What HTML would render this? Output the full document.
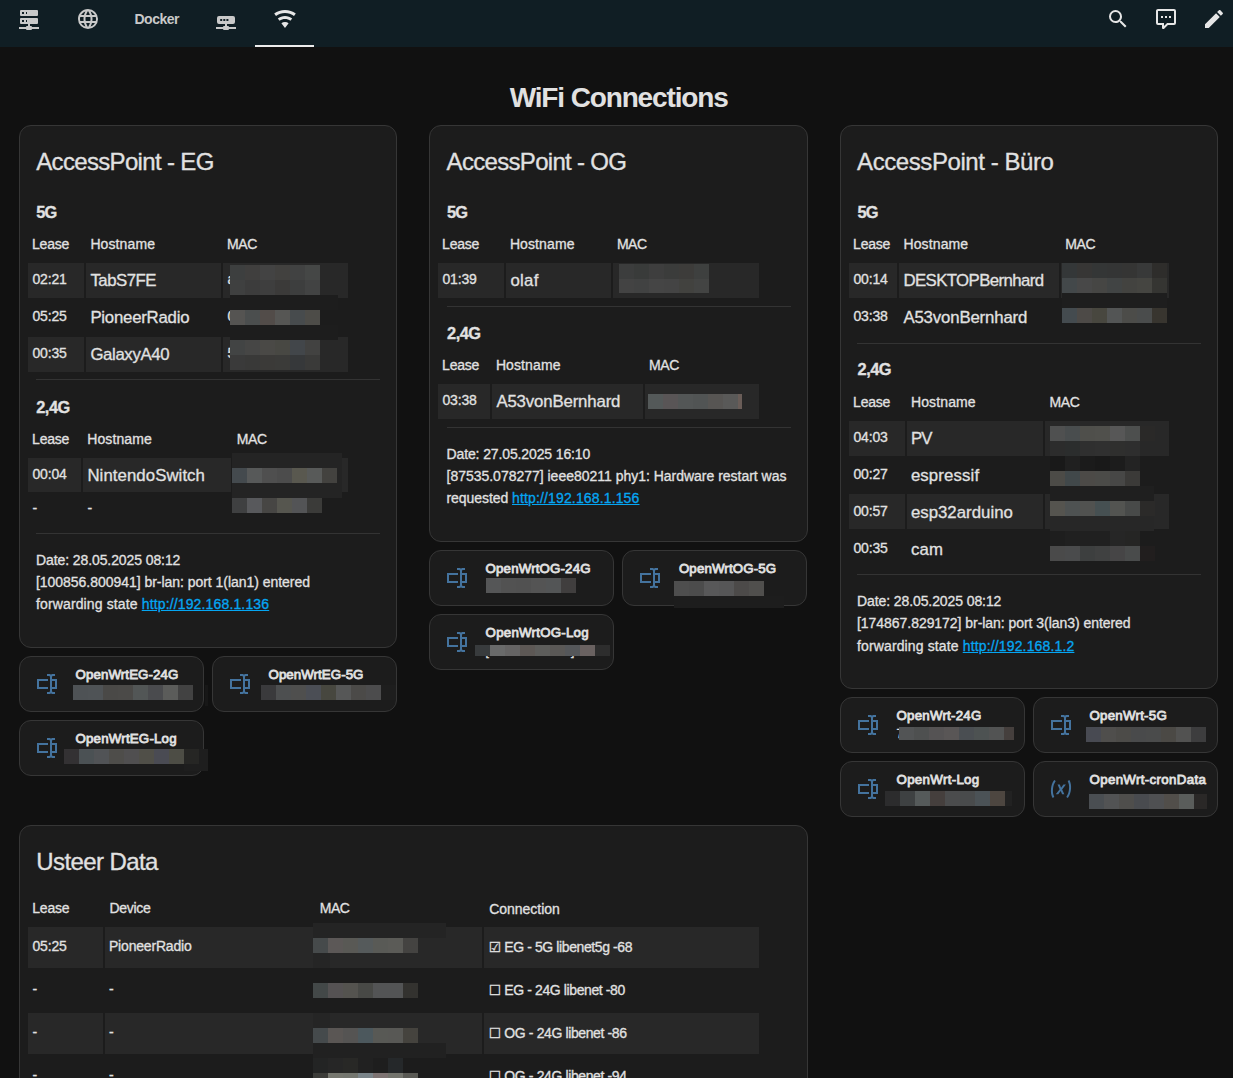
<!DOCTYPE html>
<html lang="de"><head><meta charset="utf-8"><title>WiFi Connections</title>
<style>
*{box-sizing:border-box}
html,body{margin:0;padding:0}
body{width:1233px;height:1078px;overflow:hidden;background:#111;color:#e1e1e1;
 font-family:"Liberation Sans","DejaVu Sans",sans-serif;font-size:14px;position:relative;-webkit-text-stroke:0.3px currentColor}
.bar{position:absolute;left:0;top:0;width:1233px;height:47px;background:#101e24}
.ic{position:absolute;fill:#c9c9c9}
.ic.on{fill:#e6e6e6}
.ul{position:absolute;background:#ececec;height:2px}
.t{position:absolute;white-space:pre;margin:0}
.card{position:absolute;background:#1c1c1c;border:1px solid #363636;border-radius:12px}
.ti{fill:#44739e}
.tl{-webkit-text-stroke:0.8px currentColor}
h1.t,.tab{-webkit-text-stroke:0}
.tb{position:absolute;border-collapse:separate;border-spacing:2px;table-layout:fixed;font-size:14px}
.tb th{font-weight:400;text-align:left;vertical-align:bottom;line-height:20px;white-space:nowrap;padding:0}
.tb td{padding:5.6px 0 0 4.4px;line-height:20px;vertical-align:top;white-space:nowrap;overflow:hidden}
.tb tr.o td{background:#282828}
hr{position:absolute;margin:0;border:0;height:1px;background:#333}
.blur{position:absolute;display:flex}
.blur i{display:block;height:100%}
.r{position:absolute}
a{color:#05a6f2;text-decoration:underline}
.p{position:absolute;margin:0;line-height:22.3px;font-size:14px;white-space:pre}

</style></head>
<body>
<header class="bar"><nav aria-label="Views">
<svg class="ic" style="left:17px;top:7px;" viewBox="0 0 24 24" width="24" height="24" aria-hidden="true"><path fill-rule="evenodd" d="M13,19H14A1,1 0 0,1 15,20H22V22H15A1,1 0 0,1 14,23H10A1,1 0 0,1 9,22H2V20H9A1,1 0 0,1 10,19H11V17H4A1,1 0 0,1 3,16V12A1,1 0 0,1 4,11H20A1,1 0 0,1 21,12V16A1,1 0 0,1 20,17H13V19M4,3H20A1,1 0 0,1 21,4V8A1,1 0 0,1 20,9H4A1,1 0 0,1 3,8V4A1,1 0 0,1 4,3M9,7H10V5H9V7M9,15H10V13H9V15M5,5V7H7V5H5M5,13V15H7V13H5Z"/></svg>
<svg class="ic" style="left:76px;top:7px;" viewBox="0 0 24 24" width="24" height="24" aria-hidden="true"><path fill-rule="evenodd" d="M16.36,14C16.44,13.34 16.5,12.68 16.5,12C16.5,11.32 16.44,10.66 16.36,10H19.74C19.9,10.64 20,11.31 20,12C20,12.69 19.9,13.36 19.74,14M14.59,19.56C15.19,18.45 15.65,17.25 15.97,16H18.92C17.96,17.65 16.43,18.93 14.59,19.56M14.34,14H9.66C9.56,13.34 9.5,12.68 9.5,12C9.5,11.32 9.56,10.65 9.66,10H14.34C14.43,10.65 14.5,11.32 14.5,12C14.5,12.68 14.43,13.34 14.34,14M12,19.96C11.17,18.76 10.5,17.43 10.09,16H13.91C13.5,17.43 12.83,18.76 12,19.96M8,8H5.08C6.03,6.34 7.57,5.06 9.4,4.44C8.8,5.55 8.35,6.75 8,8M5.08,16H8C8.35,17.25 8.8,18.45 9.4,19.56C7.57,18.93 6.03,17.65 5.08,16M4.26,14C4.1,13.36 4,12.69 4,12C4,11.31 4.1,10.64 4.26,10H7.64C7.56,10.66 7.5,11.32 7.5,12C7.5,12.68 7.56,13.34 7.64,14M12,4.03C12.83,5.23 13.5,6.57 13.91,8H10.09C10.5,6.57 11.17,5.23 12,4.03M18.92,8H15.97C15.65,6.75 15.19,5.55 14.59,4.44C16.43,5.07 17.96,6.34 18.92,8M12,2C6.47,2 2,6.5 2,12A10,10 0 0,0 12,22A10,10 0 0,0 22,12A10,10 0 0,0 12,2Z"/></svg>
<div class="t tab" style="left:134.4px;top:9.25px;font-size:14px;font-weight:700;line-height:20px;letter-spacing:-0.461px;color:#c9c9c9;">Docker</div>
<svg class="ic" style="left:214px;top:7px;" viewBox="0 0 24 24" width="24" height="24" aria-hidden="true"><path fill-rule="evenodd" d="M5,9H19A2,2 0 0,1 21,11V15A2,2 0 0,1 19,17H13V19H14A1,1 0 0,1 15,20H22V22H15A1,1 0 0,1 14,23H10A1,1 0 0,1 9,22H2V20H9A1,1 0 0,1 10,19H11V17H5A2,2 0 0,1 3,15V11A2,2 0 0,1 5,9M6.2,12V14H8.2V12H6.2M9.3,12V14H11.3V12H9.3M12.4,12V14H14.4V12H12.4Z"/></svg>
<svg class="ic on" style="left:273px;top:7px;" viewBox="0 0 24 24" width="24" height="24" aria-hidden="true"><path fill-rule="evenodd" d="M12,21L15.6,16.2C14.6,15.45 13.35,15 12,15C10.65,15 9.4,15.45 8.4,16.2L12,21M12,3C7.95,3 4.21,4.34 1.2,6.6L3,9C5.5,7.12 8.62,6 12,6C15.38,6 18.5,7.12 21,9L22.8,6.6C19.79,4.34 16.05,3 12,3M12,9C9.3,9 6.81,9.89 4.8,11.4L6.6,13.8C8.1,12.67 9.97,12 12,12C14.03,12 15.9,12.67 17.4,13.8L19.2,11.4C17.19,9.89 14.7,9 12,9Z"/></svg>
<div class="ul" style="left:255px;top:45px;width:59px"></div>
</nav><div role="toolbar" aria-label="Actions">
<svg class="ic on" style="left:1106px;top:7px;" viewBox="0 0 24 24" width="24" height="24" aria-hidden="true"><path fill-rule="evenodd" d="M9.5,3A6.5,6.5 0 0,1 16,9.5C16,11.11 15.41,12.59 14.44,13.73L14.71,14H15.5L20.5,19L19,20.5L14,15.5V14.71L13.73,14.44C12.59,15.41 11.11,16 9.5,16A6.5,6.5 0 0,1 3,9.5A6.5,6.5 0 0,1 9.5,3M9.5,5C7,5 5,7 5,9.5C5,12 7,14 9.5,14C12,14 14,12 14,9.5C14,7 12,5 9.5,5Z"/></svg>
<svg class="ic on" style="left:1154px;top:7px;" viewBox="0 0 24 24" width="24" height="24" aria-hidden="true"><path fill-rule="evenodd" d="M9,22A1,1 0 0,1 8,21V18H4A2,2 0 0,1 2,16V4C2,2.89 2.9,2 4,2H20A2,2 0 0,1 22,4V16A2,2 0 0,1 20,18H13.9L10.2,21.71C10,21.9 9.75,22 9.5,22V22H9M10,16V19.08L13.08,16H20V4H4V16H10M17,11H15V9H17V11M13,11H11V9H13V11M9,11H7V9H9V11Z"/></svg>
<svg class="ic on" style="left:1201.7px;top:7px;" viewBox="0 0 24 24" width="24" height="24" aria-hidden="true"><path fill-rule="evenodd" d="M20.71,7.04C21.1,6.65 21.1,6 20.71,5.63L18.37,3.29C18,2.9 17.35,2.9 16.96,3.29L15.12,5.12L18.87,8.87M3,17.25V21H6.75L17.81,9.93L14.06,6.18L3,17.25Z"/></svg>
</div></header>
<main>
<h1 class="t h1" style="left:509.7px;top:78.20px;font-size:28px;font-weight:700;line-height:39px;letter-spacing:-1.137px;">WiFi Connections</h1>
<section aria-label="AccessPoint - EG">
<div class="card" style="left:19px;top:125px;width:378.4px;height:523px"></div>
<h2 class="t ch" style="left:36.2px;top:144.68px;font-size:24px;font-weight:400;line-height:34px;letter-spacing:-0.660px;">AccessPoint - EG</h2>
<h3 class="t h3" style="left:36.3px;top:200.82px;font-size:16.4px;font-weight:700;line-height:23px;letter-spacing:-0.887px;">5G</h3>
<table class="tb" style="left:26px;top:232px;width:324px"><colgroup><col style="width:56px"><col style="width:135px"><col style="width:125px"></colgroup><thead><tr><th style="height:27px;padding:0 0 6.65px 4.00px;letter-spacing:-0.211px;">Lease</th><th style="height:27px;padding:0 0 6.65px 4.40px;letter-spacing:0.111px;">Hostname</th><th style="height:27px;padding:0 0 6.65px 4.10px;letter-spacing:-0.442px;">MAC</th></tr></thead><tbody><tr class="o" style="height:35px"><td style="letter-spacing:-0.149px;">02:21</td><td style="letter-spacing:-0.490px;font-size:16.8px;padding-top:7.6px;">TabS7FE</td><td style="">a</td></tr><tr style="height:35px"><td style="letter-spacing:-0.149px;">05:25</td><td style="letter-spacing:-0.232px;font-size:16.8px;padding-top:7.6px;">PioneerRadio</td><td style="">0</td></tr><tr class="o" style="height:35px"><td style="letter-spacing:-0.149px;">00:35</td><td style="letter-spacing:-0.366px;font-size:16.8px;padding-top:7.6px;">GalaxyA40</td><td style="">5</td></tr></tbody></table>
<hr style="left:36px;top:379px;width:344px">
<h3 class="t h3" style="left:36.2px;top:395.52px;font-size:16.4px;font-weight:700;line-height:23px;letter-spacing:-0.487px;">2,4G</h3>
<table class="tb" style="left:26px;top:427px;width:324px"><colgroup><col style="width:53px"><col style="width:148px"><col style="width:115px"></colgroup><thead><tr><th style="height:27px;padding:0 0 6.95px 4.10px;letter-spacing:-0.211px;">Lease</th><th style="height:27px;padding:0 0 6.95px 4.20px;letter-spacing:0.111px;">Hostname</th><th style="height:27px;padding:0 0 6.95px 3.80px;letter-spacing:-0.442px;">MAC</th></tr></thead><tbody><tr class="o" style="height:34px"><td style="letter-spacing:-0.149px;">00:04</td><td style="letter-spacing:0.071px;font-size:16.8px;padding-top:7.6px;">NintendoSwitch</td><td></td></tr><tr style="height:29px"><td style="padding-top:3.6px;">-</td><td style="padding-top:3.6px;">-</td><td></td></tr></tbody></table>
<hr style="left:36px;top:533px;width:344px">
<p class="p" style="left:36px;top:549.08px;line-height:22.15px"><span style="letter-spacing:-0.093px;">Date: 28.05.2025 08:12</span><br><span style="letter-spacing:-0.035px;">[100856.800941] br-lan: port 1(lan1) entered</span><br><span style="letter-spacing:0.129px;">forwarding state </span><a style="letter-spacing:0.147px;">http://192.168.1.136</a></p>
<div class="card tile" style="left:19px;top:656px;width:185px;height:56px"></div>
<svg class="ic ti" style="left:35.0px;top:672px;" viewBox="0 0 24 24" width="24" height="24" aria-hidden="true"><path fill-rule="evenodd" d="M17,7H22V17H17V19A1,1 0 0,0 18,20H20V22H17.5C16.95,22 16,21.55 16,21C16,21.55 15.05,22 14.5,22H12V20H14A1,1 0 0,0 15,19V5A1,1 0 0,0 14,4H12V2H14.5C15.05,2 16,2.45 16,3C16,2.45 16.95,2 17.5,2H20V4H18A1,1 0 0,0 17,5V7M2,7H13V9H4V15H13V17H2V7M20,15V9H17V15H20Z"/></svg>
<div class="t tl" style="left:75.5px;top:665.39px;font-size:13.3px;font-weight:400;line-height:19px;letter-spacing:0.097px;">OpenWrtEG-24G</div>
<div class="card tile" style="left:212px;top:656px;width:185px;height:56px"></div>
<svg class="ic ti" style="left:228.0px;top:672px;" viewBox="0 0 24 24" width="24" height="24" aria-hidden="true"><path fill-rule="evenodd" d="M17,7H22V17H17V19A1,1 0 0,0 18,20H20V22H17.5C16.95,22 16,21.55 16,21C16,21.55 15.05,22 14.5,22H12V20H14A1,1 0 0,0 15,19V5A1,1 0 0,0 14,4H12V2H14.5C15.05,2 16,2.45 16,3C16,2.45 16.95,2 17.5,2H20V4H18A1,1 0 0,0 17,5V7M2,7H13V9H4V15H13V17H2V7M20,15V9H17V15H20Z"/></svg>
<div class="t tl" style="left:268.5px;top:665.39px;font-size:13.3px;font-weight:400;line-height:19px;letter-spacing:0.055px;">OpenWrtEG-5G</div>
<div class="card tile" style="left:19px;top:720px;width:185px;height:56px"></div>
<svg class="ic ti" style="left:35.0px;top:736px;" viewBox="0 0 24 24" width="24" height="24" aria-hidden="true"><path fill-rule="evenodd" d="M17,7H22V17H17V19A1,1 0 0,0 18,20H20V22H17.5C16.95,22 16,21.55 16,21C16,21.55 15.05,22 14.5,22H12V20H14A1,1 0 0,0 15,19V5A1,1 0 0,0 14,4H12V2H14.5C15.05,2 16,2.45 16,3C16,2.45 16.95,2 17.5,2H20V4H18A1,1 0 0,0 17,5V7M2,7H13V9H4V15H13V17H2V7M20,15V9H17V15H20Z"/></svg>
<div class="t tl" style="left:75.5px;top:729.39px;font-size:13.3px;font-weight:400;line-height:19px;letter-spacing:0.193px;">OpenWrtEG-Log</div>
</section>
<section aria-label="AccessPoint - OG">
<div class="card" style="left:429.1px;top:125px;width:378.6px;height:416.6px"></div>
<h2 class="t ch" style="left:446.6px;top:144.68px;font-size:24px;font-weight:400;line-height:34px;letter-spacing:-0.690px;">AccessPoint - OG</h2>
<h3 class="t h3" style="left:447.0px;top:200.82px;font-size:16.4px;font-weight:700;line-height:23px;letter-spacing:-0.887px;">5G</h3>
<table class="tb" style="left:436px;top:232px;width:325px"><colgroup><col style="width:66px"><col style="width:105px"><col style="width:146px"></colgroup><thead><tr><th style="height:27px;padding:0 0 6.65px 4.10px;letter-spacing:-0.211px;">Lease</th><th style="height:27px;padding:0 0 6.65px 3.90px;letter-spacing:0.111px;">Hostname</th><th style="height:27px;padding:0 0 6.65px 3.90px;letter-spacing:-0.442px;">MAC</th></tr></thead><tbody><tr class="o" style="height:35px"><td style="letter-spacing:-0.149px;">01:39</td><td style="letter-spacing:0.334px;font-size:16.8px;padding-top:7.6px;">olaf</td><td></td></tr></tbody></table>
<hr style="left:446.5px;top:306px;width:344px">
<h3 class="t h3" style="left:447.0px;top:322.32px;font-size:16.4px;font-weight:700;line-height:23px;letter-spacing:-0.487px;">2,4G</h3>
<table class="tb" style="left:436px;top:353px;width:325px"><colgroup><col style="width:52px"><col style="width:151px"><col style="width:114px"></colgroup><thead><tr><th style="height:27px;padding:0 0 6.85px 4.10px;letter-spacing:-0.211px;">Lease</th><th style="height:27px;padding:0 0 6.85px 3.90px;letter-spacing:0.111px;">Hostname</th><th style="height:27px;padding:0 0 6.85px 4.10px;letter-spacing:-0.442px;">MAC</th></tr></thead><tbody><tr class="o" style="height:35px"><td style="letter-spacing:-0.149px;">03:38</td><td style="letter-spacing:-0.147px;font-size:16.8px;padding-top:7.6px;">A53vonBernhard</td><td></td></tr></tbody></table>
<hr style="left:446.5px;top:427px;width:344px">
<p class="p" style="left:446.5px;top:443.15px;line-height:22.0px"><span style="letter-spacing:-0.120px;">Date: 27.05.2025 16:10</span><br><span style="letter-spacing:-0.013px;">[87535.078277] ieee80211 phy1: Hardware restart was</span><br><span style="letter-spacing:-0.067px;">requested </span><a style="letter-spacing:0.147px;">http://192.168.1.156</a></p>
<div class="card tile" style="left:429.1px;top:550px;width:185px;height:56px"></div>
<svg class="ic ti" style="left:445.1px;top:566px;" viewBox="0 0 24 24" width="24" height="24" aria-hidden="true"><path fill-rule="evenodd" d="M17,7H22V17H17V19A1,1 0 0,0 18,20H20V22H17.5C16.95,22 16,21.55 16,21C16,21.55 15.05,22 14.5,22H12V20H14A1,1 0 0,0 15,19V5A1,1 0 0,0 14,4H12V2H14.5C15.05,2 16,2.45 16,3C16,2.45 16.95,2 17.5,2H20V4H18A1,1 0 0,0 17,5V7M2,7H13V9H4V15H13V17H2V7M20,15V9H17V15H20Z"/></svg>
<div class="t tl" style="left:485.6px;top:559.39px;font-size:13.3px;font-weight:400;line-height:19px;letter-spacing:0.145px;">OpenWrtOG-24G</div>
<div class="card tile" style="left:622.4px;top:550px;width:185px;height:56px"></div>
<svg class="ic ti" style="left:638.4px;top:566px;" viewBox="0 0 24 24" width="24" height="24" aria-hidden="true"><path fill-rule="evenodd" d="M17,7H22V17H17V19A1,1 0 0,0 18,20H20V22H17.5C16.95,22 16,21.55 16,21C16,21.55 15.05,22 14.5,22H12V20H14A1,1 0 0,0 15,19V5A1,1 0 0,0 14,4H12V2H14.5C15.05,2 16,2.45 16,3C16,2.45 16.95,2 17.5,2H20V4H18A1,1 0 0,0 17,5V7M2,7H13V9H4V15H13V17H2V7M20,15V9H17V15H20Z"/></svg>
<div class="t tl" style="left:678.9px;top:559.39px;font-size:13.3px;font-weight:400;line-height:19px;letter-spacing:0.124px;">OpenWrtOG-5G</div>
<div class="card tile" style="left:429.1px;top:614px;width:185px;height:56px"></div>
<svg class="ic ti" style="left:445.1px;top:630px;" viewBox="0 0 24 24" width="24" height="24" aria-hidden="true"><path fill-rule="evenodd" d="M17,7H22V17H17V19A1,1 0 0,0 18,20H20V22H17.5C16.95,22 16,21.55 16,21C16,21.55 15.05,22 14.5,22H12V20H14A1,1 0 0,0 15,19V5A1,1 0 0,0 14,4H12V2H14.5C15.05,2 16,2.45 16,3C16,2.45 16.95,2 17.5,2H20V4H18A1,1 0 0,0 17,5V7M2,7H13V9H4V15H13V17H2V7M20,15V9H17V15H20Z"/></svg>
<div class="t tl" style="left:485.6px;top:623.39px;font-size:13.3px;font-weight:400;line-height:19px;letter-spacing:0.226px;">OpenWrtOG-Log</div>
<div class="t ts" style="left:485.5px;top:642.84px;font-size:12px;font-weight:400;line-height:17px;">[</div>
<div class="t ts" style="left:571px;top:642.84px;font-size:12px;font-weight:400;line-height:17px;">]</div>
</section>
<section aria-label="AccessPoint - Büro">
<div class="card" style="left:840px;top:125px;width:378px;height:563.6px"></div>
<h2 class="t ch" style="left:857.1px;top:144.68px;font-size:24px;font-weight:400;line-height:34px;letter-spacing:-0.427px;">AccessPoint - Büro</h2>
<h3 class="t h3" style="left:857.5px;top:200.82px;font-size:16.4px;font-weight:700;line-height:23px;letter-spacing:-0.887px;">5G</h3>
<table class="tb" style="left:847px;top:232px;width:324px"><colgroup><col style="width:48px"><col style="width:160px"><col style="width:108px"></colgroup><thead><tr><th style="height:27px;padding:0 0 6.65px 4.10px;letter-spacing:-0.211px;">Lease</th><th style="height:27px;padding:0 0 6.65px 4.50px;letter-spacing:0.111px;">Hostname</th><th style="height:27px;padding:0 0 6.65px 4.30px;letter-spacing:-0.442px;">MAC</th></tr></thead><tbody><tr class="o" style="height:35px"><td style="letter-spacing:-0.149px;">00:14</td><td style="letter-spacing:-0.583px;font-size:16.8px;padding-top:7.6px;">DESKTOPBernhard</td><td></td></tr><tr style="height:35px"><td style="letter-spacing:-0.149px;">03:38</td><td style="letter-spacing:-0.154px;font-size:16.8px;padding-top:7.6px;">A53vonBernhard</td><td></td></tr></tbody></table>
<hr style="left:857px;top:343px;width:344px">
<h3 class="t h3" style="left:857.5px;top:358.22px;font-size:16.4px;font-weight:700;line-height:23px;letter-spacing:-0.487px;">2,4G</h3>
<table class="tb" style="left:847px;top:390px;width:324px"><colgroup><col style="width:55.5px"><col style="width:136.0px"><col style="width:124.5px"></colgroup><thead><tr><th style="height:27px;padding:0 0 7.35px 4.10px;letter-spacing:-0.211px;">Lease</th><th style="height:27px;padding:0 0 7.35px 4.50px;letter-spacing:0.111px;">Hostname</th><th style="height:27px;padding:0 0 7.35px 5.10px;letter-spacing:-0.442px;">MAC</th></tr></thead><tbody><tr class="o" style="height:35px"><td style="letter-spacing:-0.149px;">04:03</td><td style="letter-spacing:-0.745px;font-size:16.8px;padding-top:7.6px;">PV</td><td></td></tr><tr style="height:34px"><td style="letter-spacing:-0.149px;">00:27</td><td style="letter-spacing:0.127px;font-size:16.8px;padding-top:7.6px;">espressif</td><td></td></tr><tr class="o" style="height:35px"><td style="letter-spacing:-0.149px;padding-top:6.6px;">00:57</td><td style="letter-spacing:0.023px;font-size:16.8px;padding-top:8.6px;">esp32arduino</td><td></td></tr><tr style="height:35px"><td style="letter-spacing:-0.149px;padding-top:6.6px;">00:35</td><td style="letter-spacing:0.232px;font-size:16.8px;padding-top:8.6px;">cam</td><td></td></tr></tbody></table>
<hr style="left:857px;top:574px;width:344px">
<p class="p" style="left:857px;top:589.98px;line-height:22.35px"><span style="letter-spacing:-0.093px;">Date: 28.05.2025 08:12</span><br><span style="letter-spacing:-0.044px;">[174867.829172] br-lan: port 3(lan3) entered</span><br><span style="letter-spacing:0.129px;">forwarding state </span><a style="letter-spacing:0.151px;">http://192.168.1.2</a></p>
<div class="card tile" style="left:840px;top:697px;width:185px;height:56px"></div>
<svg class="ic ti" style="left:856.0px;top:713px;" viewBox="0 0 24 24" width="24" height="24" aria-hidden="true"><path fill-rule="evenodd" d="M17,7H22V17H17V19A1,1 0 0,0 18,20H20V22H17.5C16.95,22 16,21.55 16,21C16,21.55 15.05,22 14.5,22H12V20H14A1,1 0 0,0 15,19V5A1,1 0 0,0 14,4H12V2H14.5C15.05,2 16,2.45 16,3C16,2.45 16.95,2 17.5,2H20V4H18A1,1 0 0,0 17,5V7M2,7H13V9H4V15H13V17H2V7M20,15V9H17V15H20Z"/></svg>
<div class="t tl" style="left:896.5px;top:706.39px;font-size:13.3px;font-weight:400;line-height:19px;letter-spacing:0.224px;">OpenWrt-24G</div>
<div class="t ts" style="left:896.5px;top:725.84px;font-size:12px;font-weight:400;line-height:17px;">7</div>
<div class="card tile" style="left:1033px;top:697px;width:185px;height:56px"></div>
<svg class="ic ti" style="left:1049.0px;top:713px;" viewBox="0 0 24 24" width="24" height="24" aria-hidden="true"><path fill-rule="evenodd" d="M17,7H22V17H17V19A1,1 0 0,0 18,20H20V22H17.5C16.95,22 16,21.55 16,21C16,21.55 15.05,22 14.5,22H12V20H14A1,1 0 0,0 15,19V5A1,1 0 0,0 14,4H12V2H14.5C15.05,2 16,2.45 16,3C16,2.45 16.95,2 17.5,2H20V4H18A1,1 0 0,0 17,5V7M2,7H13V9H4V15H13V17H2V7M20,15V9H17V15H20Z"/></svg>
<div class="t tl" style="left:1089.5px;top:706.39px;font-size:13.3px;font-weight:400;line-height:19px;letter-spacing:0.236px;">OpenWrt-5G</div>
<div class="card tile" style="left:840px;top:761px;width:185px;height:56px"></div>
<svg class="ic ti" style="left:856.0px;top:777px;" viewBox="0 0 24 24" width="24" height="24" aria-hidden="true"><path fill-rule="evenodd" d="M17,7H22V17H17V19A1,1 0 0,0 18,20H20V22H17.5C16.95,22 16,21.55 16,21C16,21.55 15.05,22 14.5,22H12V20H14A1,1 0 0,0 15,19V5A1,1 0 0,0 14,4H12V2H14.5C15.05,2 16,2.45 16,3C16,2.45 16.95,2 17.5,2H20V4H18A1,1 0 0,0 17,5V7M2,7H13V9H4V15H13V17H2V7M20,15V9H17V15H20Z"/></svg>
<div class="t tl" style="left:896.5px;top:770.39px;font-size:13.3px;font-weight:400;line-height:19px;letter-spacing:0.311px;">OpenWrt-Log</div>
<div class="card tile" style="left:1033px;top:761px;width:185px;height:56px"></div>
<svg class="ic ti" style="left:1049.0px;top:777px;" viewBox="0 0 24 24" width="24" height="24" aria-hidden="true"><path fill-rule="evenodd" d="M20.41,3C21.8,5.71 22.35,8.84 22,12C21.8,15.16 20.7,18.29 18.83,21L17.3,20C18.91,17.57 19.85,14.8 20,12C20.34,9.2 19.89,6.43 18.7,4L20.41,3M5.17,3L6.7,4C5.09,6.43 4.15,9.2 4,12C3.66,14.8 4.12,17.57 5.3,20L3.61,21C2.21,18.29 1.65,15.17 2,12C2.2,8.84 3.3,5.71 5.17,3M12.08,10.68L14.4,7.45H16.93L13.15,12.45L15.35,17.37H13.09L11.71,14L9.28,17.33H6.76L10.66,12.21L8.53,7.45H10.8L12.08,10.68Z"/></svg>
<div class="t tl" style="left:1089.5px;top:770.39px;font-size:13.3px;font-weight:400;line-height:19px;letter-spacing:0.335px;">OpenWrt-cronData</div>
</section>
<section aria-label="Usteer Data">
<div class="card" style="left:19px;top:825px;width:788.5px;height:300px"></div>
<h2 class="t ch" style="left:36.3px;top:844.68px;font-size:24px;font-weight:400;line-height:34px;letter-spacing:-0.597px;">Usteer Data</h2>
<table class="tb" style="left:26px;top:896px;width:735px"><colgroup><col style="width:74.5px"><col style="width:208px"><col style="width:167.5px"><col style="width:274.5px"></colgroup><thead><tr><th style="height:27px;padding:0 0 6.85px 4.30px;letter-spacing:-0.211px;">Lease</th><th style="height:27px;padding:0 0 6.85px 5.00px;letter-spacing:-0.316px;">Device</th><th style="height:27px;padding:0 0 6.85px 5.00px;letter-spacing:-0.442px;">MAC</th><th style="height:27px;padding:0 0 5.85px 5.00px;letter-spacing:-0.043px;">Connection</th></tr></thead><tbody><tr class="o" style="height:41px"><td style="letter-spacing:-0.149px;padding-top:9.3px;">05:25</td><td style="letter-spacing:-0.179px;padding-top:9.3px;">PioneerRadio</td><td></td><td style="letter-spacing:-0.402px;padding-top:10.3px;">☑ EG - 5G libenet5g -68</td></tr><tr style="height:41px"><td style="padding-top:8.8px;">-</td><td style="padding-top:8.8px;">-</td><td></td><td style="letter-spacing:-0.393px;padding-top:10.3px;">☐ EG - 24G libenet -80</td></tr><tr class="o" style="height:41px"><td style="padding-top:8.8px;">-</td><td style="padding-top:8.8px;">-</td><td></td><td style="letter-spacing:-0.387px;padding-top:10.3px;">☐ OG - 24G libenet -86</td></tr><tr style="height:41px"><td style="padding-top:8.8px;">-</td><td style="padding-top:8.8px;">-</td><td></td><td style="letter-spacing:-0.387px;padding-top:10.3px;">☐ OG - 24G libenet -94</td></tr></tbody></table>
</section>
<div class="redacted" aria-hidden="true">
<div class="r" style="left:230px;top:295px;width:108px;height:15px;background:#1d1d1d"></div>
<div class="r" style="left:230px;top:325px;width:108px;height:15px;background:#1d1d1d"></div>
<div class="blur" style="left:230px;top:265px;width:90px;height:15px"><i style="background:#3d3f3f;width:15px"></i><i style="background:#403f3e;width:15px"></i><i style="background:#434343;width:15px"></i><i style="background:#42413f;width:15px"></i><i style="background:#414242;width:15px"></i><i style="background:#454746;width:15px"></i></div>
<div class="blur" style="left:230px;top:280px;width:90px;height:15px"><i style="background:#3f4040;width:15px"></i><i style="background:#3c3c3c;width:15px"></i><i style="background:#3e3e3e;width:15px"></i><i style="background:#3b3a39;width:15px"></i><i style="background:#3d3e3e;width:15px"></i><i style="background:#424343;width:15px"></i></div>
<div class="blur" style="left:230px;top:310px;width:90px;height:15px"><i style="background:#555452;width:15px"></i><i style="background:#4b4e4e;width:15px"></i><i style="background:#524c49;width:15px"></i><i style="background:#565654;width:15px"></i><i style="background:#474b4d;width:15px"></i><i style="background:#4d4c48;width:15px"></i></div>
<div class="blur" style="left:230px;top:340px;width:90px;height:15px"><i style="background:#424444;width:15px"></i><i style="background:#464645;width:15px"></i><i style="background:#4a4946;width:15px"></i><i style="background:#484843;width:15px"></i><i style="background:#42464a;width:15px"></i><i style="background:#424241;width:15px"></i></div>
<div class="blur" style="left:230px;top:355px;width:90px;height:15px"><i style="background:#3a3a3a;width:15px"></i><i style="background:#393938;width:15px"></i><i style="background:#3b3a38;width:15px"></i><i style="background:#3b3b39;width:15px"></i><i style="background:#36383a;width:15px"></i><i style="background:#3a3a39;width:15px"></i></div>
<div class="r" style="left:232px;top:453px;width:110px;height:45px;background:#242424"></div>
<div class="blur" style="left:232px;top:468px;width:105px;height:15px"><i style="background:#444a4e;width:15px"></i><i style="background:#575959;width:15px"></i><i style="background:#4f4f4f;width:15px"></i><i style="background:#4c4c4c;width:15px"></i><i style="background:#59584f;width:15px"></i><i style="background:#585a59;width:15px"></i><i style="background:#43423f;width:15px"></i></div>
<div class="blur" style="left:232px;top:498px;width:90px;height:15px"><i style="background:#3f4041;width:15px"></i><i style="background:#58595c;width:15px"></i><i style="background:#474644;width:15px"></i><i style="background:#56564f;width:15px"></i><i style="background:#535456;width:15px"></i><i style="background:#3b3b39;width:15px"></i></div>
<div class="blur" style="left:619px;top:264px;width:90px;height:15px"><i style="background:#3c3d3d;width:15px"></i><i style="background:#393b3a;width:15px"></i><i style="background:#3e3e3e;width:15px"></i><i style="background:#3b3c3b;width:15px"></i><i style="background:#3d3c3a;width:15px"></i><i style="background:#3e403f;width:15px"></i></div>
<div class="blur" style="left:619px;top:279px;width:90px;height:14px"><i style="background:#434343;width:15px"></i><i style="background:#414242;width:15px"></i><i style="background:#454545;width:15px"></i><i style="background:#444444;width:15px"></i><i style="background:#42423f;width:15px"></i><i style="background:#434443;width:15px"></i></div>
<div class="blur" style="left:648px;top:394px;width:90px;height:15px"><i style="background:#545959;width:15px"></i><i style="background:#595556;width:15px"></i><i style="background:#535656;width:15px"></i><i style="background:#515454;width:15px"></i><i style="background:#575553;width:15px"></i><i style="background:#595958;width:15px"></i></div>
<div class="r" style="left:738px;top:394px;width:4px;height:15px;background:#6a5d58"></div>
<div class="blur" style="left:1062px;top:263px;width:105px;height:15px"><i style="background:#343738;width:15px"></i><i style="background:#373635;width:15px"></i><i style="background:#343636;width:15px"></i><i style="background:#343535;width:15px"></i><i style="background:#353534;width:15px"></i><i style="background:#383939;width:15px"></i><i style="background:#2e2d2b;width:15px"></i></div>
<div class="blur" style="left:1062px;top:278px;width:105px;height:15px"><i style="background:#43484a;width:15px"></i><i style="background:#484848;width:15px"></i><i style="background:#464644;width:15px"></i><i style="background:#414444;width:15px"></i><i style="background:#434340;width:15px"></i><i style="background:#454541;width:15px"></i><i style="background:#353532;width:15px"></i></div>
<div class="r" style="left:1062px;top:293px;width:105px;height:15px;background:#1e1e1e"></div>
<div class="blur" style="left:1062px;top:308px;width:105px;height:15px"><i style="background:#444b4f;width:15px"></i><i style="background:#4d4a47;width:15px"></i><i style="background:#48473f;width:15px"></i><i style="background:#535555;width:15px"></i><i style="background:#4c4c49;width:15px"></i><i style="background:#4a4c4c;width:15px"></i><i style="background:#38352f;width:15px"></i></div>
<div class="blur" style="left:1050px;top:426px;width:105px;height:15px"><i style="background:#4f5050;width:15px"></i><i style="background:#494d4e;width:15px"></i><i style="background:#4f4f4b;width:15px"></i><i style="background:#50504c;width:15px"></i><i style="background:#575757;width:15px"></i><i style="background:#4d4f4e;width:15px"></i><i style="background:#2a2928;width:15px"></i></div>
<div class="blur" style="left:1050px;top:441px;width:90px;height:15px"><i style="background:#2c2c2c;width:15px"></i><i style="background:#2b2d2d;width:15px"></i><i style="background:#2f2f2f;width:15px"></i><i style="background:#303030;width:15px"></i><i style="background:#2f2f2e;width:15px"></i><i style="background:#2e2e2e;width:15px"></i></div>
<div class="blur" style="left:1050px;top:456px;width:90px;height:15px"><i style="background:#191919;width:15px"></i><i style="background:#202020;width:15px"></i><i style="background:#1b1b1b;width:15px"></i><i style="background:#191919;width:15px"></i><i style="background:#1c1c1c;width:15px"></i><i style="background:#232323;width:15px"></i></div>
<div class="blur" style="left:1050px;top:471px;width:90px;height:15px"><i style="background:#4c4b47;width:15px"></i><i style="background:#41484a;width:15px"></i><i style="background:#4c4a47;width:15px"></i><i style="background:#4b4b48;width:15px"></i><i style="background:#474746;width:15px"></i><i style="background:#3b3a38;width:15px"></i></div>
<div class="r" style="left:1050px;top:486px;width:104px;height:15px;background:#1f1f1f"></div>
<div class="blur" style="left:1050px;top:501px;width:105px;height:15px"><i style="background:#55544f;width:15px"></i><i style="background:#4e5252;width:15px"></i><i style="background:#515250;width:15px"></i><i style="background:#465052;width:15px"></i><i style="background:#535451;width:15px"></i><i style="background:#484a49;width:15px"></i><i style="background:#2b2a29;width:15px"></i></div>
<div class="r" style="left:1050px;top:516px;width:104px;height:15px;background:#272727"></div>
<div class="blur" style="left:1050px;top:531px;width:90px;height:15px"><i style="background:#1e1e1e;width:15px"></i><i style="background:#202020;width:15px"></i><i style="background:#202020;width:15px"></i><i style="background:#202020;width:15px"></i><i style="background:#262626;width:15px"></i><i style="background:#252524;width:15px"></i></div>
<div class="blur" style="left:1050px;top:546px;width:105px;height:15px"><i style="background:#4a4a4a;width:15px"></i><i style="background:#4a4b4c;width:15px"></i><i style="background:#3d3f3f;width:15px"></i><i style="background:#404141;width:15px"></i><i style="background:#464546;width:15px"></i><i style="background:#494b4b;width:15px"></i><i style="background:#211e1e;width:15px"></i></div>
<div class="r" style="left:204.5px;top:685px;width:3.5px;height:21px;background:#171717"></div>
<div class="blur" style="left:73px;top:685px;width:120px;height:15px"><i style="background:#4e5255;width:15px"></i><i style="background:#4f5356;width:15px"></i><i style="background:#4a4947;width:15px"></i><i style="background:#4b4a48;width:15px"></i><i style="background:#525656;width:15px"></i><i style="background:#4a4b4e;width:15px"></i><i style="background:#5b5c5a;width:15px"></i><i style="background:#424242;width:15px"></i></div>
<div class="blur" style="left:261px;top:685px;width:135px;height:15px"><i style="background:#3a3a3c;width:15px"></i><i style="background:#4d4f50;width:15px"></i><i style="background:#4f4f4e;width:15px"></i><i style="background:#4b4e55;width:15px"></i><i style="background:#47473f;width:15px"></i><i style="background:#565757;width:15px"></i><i style="background:#4b4a48;width:15px"></i><i style="background:#4c4c4d;width:15px"></i><i style="background:#1e1e1e;width:15px"></i></div>
<div class="r" style="left:184px;top:749px;width:24px;height:22px;background:#1e1e1e"></div>
<div class="blur" style="left:64px;top:749px;width:135px;height:15px"><i style="background:#333133;width:15px"></i><i style="background:#4b5154;width:15px"></i><i style="background:#515356;width:15px"></i><i style="background:#4e4d4a;width:15px"></i><i style="background:#504f50;width:15px"></i><i style="background:#504f48;width:15px"></i><i style="background:#4a4b53;width:15px"></i><i style="background:#4d4d45;width:15px"></i><i style="background:#262624;width:15px"></i></div>
<div class="blur" style="left:486px;top:578px;width:90px;height:15px"><i style="background:#555657;width:15px"></i><i style="background:#525252;width:15px"></i><i style="background:#515151;width:15px"></i><i style="background:#545454;width:15px"></i><i style="background:#535556;width:15px"></i><i style="background:#403e3e;width:15px"></i></div>
<div class="r" style="left:674px;top:596px;width:110px;height:12px;background:#1d1d1d"></div>
<div class="blur" style="left:674px;top:581px;width:90px;height:15px"><i style="background:#4e4e4e;width:15px"></i><i style="background:#4c4c4c;width:15px"></i><i style="background:#585859;width:15px"></i><i style="background:#565657;width:15px"></i><i style="background:#4c4a49;width:15px"></i><i style="background:#504f4d;width:15px"></i></div>
<div class="blur" style="left:475px;top:645px;width:135px;height:11px"><i style="background:#383b3d;width:15px"></i><i style="background:#696a6a;width:15px"></i><i style="background:#656464;width:15px"></i><i style="background:#5d5855;width:15px"></i><i style="background:#5d5d5b;width:15px"></i><i style="background:#5a5856;width:15px"></i><i style="background:#55575a;width:15px"></i><i style="background:#6a6261;width:15px"></i><i style="background:#2d2d2d;width:15px"></i></div>
<div class="blur" style="left:899px;top:727px;width:105px;height:13px"><i style="background:#525455;width:15px"></i><i style="background:#4e5050;width:15px"></i><i style="background:#555354;width:15px"></i><i style="background:#595656;width:15px"></i><i style="background:#4a4e52;width:15px"></i><i style="background:#4d5252;width:15px"></i><i style="background:#525353;width:15px"></i></div>
<div class="r" style="left:1004px;top:727px;width:10px;height:13px;background:#453f3d"></div>
<div class="blur" style="left:1086px;top:727px;width:120px;height:15px"><i style="background:#484a52;width:15px"></i><i style="background:#4f4e4c;width:15px"></i><i style="background:#4c4b48;width:15px"></i><i style="background:#494a4b;width:15px"></i><i style="background:#4a4b4b;width:15px"></i><i style="background:#4b4945;width:15px"></i><i style="background:#525251;width:15px"></i><i style="background:#3d3d3e;width:15px"></i></div>
<div class="blur" style="left:885px;top:791px;width:120px;height:15px"><i style="background:#2c2c2d;width:15px"></i><i style="background:#3e4142;width:15px"></i><i style="background:#555a5a;width:15px"></i><i style="background:#453f3d;width:15px"></i><i style="background:#4b4c4d;width:15px"></i><i style="background:#494b4c;width:15px"></i><i style="background:#4b5256;width:15px"></i><i style="background:#4d4640;width:15px"></i></div>
<div class="r" style="left:1005px;top:791px;width:7px;height:15px;background:#222222"></div>
<div class="blur" style="left:1089px;top:794px;width:105px;height:15px"><i style="background:#4a4e52;width:15px"></i><i style="background:#525354;width:15px"></i><i style="background:#4f4e4c;width:15px"></i><i style="background:#494b4f;width:15px"></i><i style="background:#4f5052;width:15px"></i><i style="background:#514e4a;width:15px"></i><i style="background:#5a5d5b;width:15px"></i></div>
<div class="r" style="left:1194px;top:794px;width:13px;height:15px;background:#2a2827"></div>
<div class="r" style="left:313px;top:923px;width:133px;height:15px;background:#242424"></div>
<div class="blur" style="left:313px;top:938px;width:105px;height:15px"><i style="background:#464a4b;width:15px"></i><i style="background:#5c5857;width:15px"></i><i style="background:#595955;width:15px"></i><i style="background:#555a5b;width:15px"></i><i style="background:#595a56;width:15px"></i><i style="background:#5b5b57;width:15px"></i><i style="background:#444341;width:15px"></i></div>
<div class="r" style="left:313px;top:953px;width:17px;height:15px;background:#252525"></div>
<div class="blur" style="left:313px;top:983px;width:105px;height:15px"><i style="background:#434848;width:15px"></i><i style="background:#555253;width:15px"></i><i style="background:#54534f;width:15px"></i><i style="background:#484946;width:15px"></i><i style="background:#535455;width:15px"></i><i style="background:#535455;width:15px"></i><i style="background:#33322f;width:15px"></i></div>
<div class="r" style="left:313px;top:1013px;width:17px;height:15px;background:#252525"></div>
<div class="blur" style="left:313px;top:1028px;width:105px;height:15px"><i style="background:#454a4c;width:15px"></i><i style="background:#5a5654;width:15px"></i><i style="background:#555453;width:15px"></i><i style="background:#4c585d;width:15px"></i><i style="background:#585955;width:15px"></i><i style="background:#585855;width:15px"></i><i style="background:#45433e;width:15px"></i></div>
<div class="r" style="left:313px;top:1043px;width:133px;height:15px;background:#212121"></div>
<div class="blur" style="left:313px;top:1058px;width:90px;height:15px"><i style="background:#232424;width:15px"></i><i style="background:#262626;width:15px"></i><i style="background:#282826;width:15px"></i><i style="background:#212121;width:15px"></i><i style="background:#1e1e1e;width:15px"></i><i style="background:#25282a;width:15px"></i></div>
<div class="blur" style="left:313px;top:1073px;width:105px;height:15px"><i style="background:#3c3c39;width:15px"></i><i style="background:#76776f;width:15px"></i><i style="background:#74766f;width:15px"></i><i style="background:#7a8489;width:15px"></i><i style="background:#7d7372;width:15px"></i><i style="background:#73746d;width:15px"></i><i style="background:#5a5a55;width:15px"></i></div>
</div>
</main>
</body></html>
